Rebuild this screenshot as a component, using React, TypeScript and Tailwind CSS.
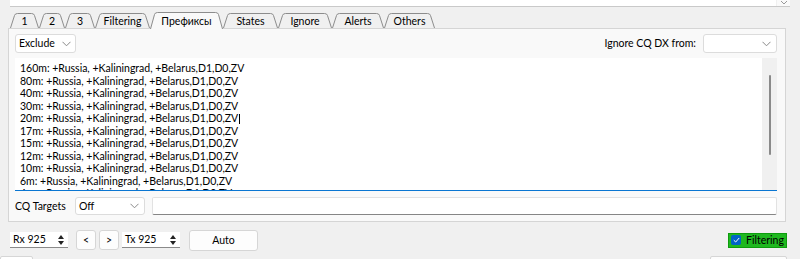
import React from "react";

const TABS = [
  { label: "1", w: 29 },
  { label: "2", w: 26 },
  { label: "3", w: 30 },
  { label: "Filtering", w: 55 },
  { label: "Префиксы", w: 73, active: true },
  { label: "States", w: 55 },
  { label: "Ignore", w: 54 },
  { label: "Alerts", w: 52 },
  { label: "Others", w: 51 },
];

// last one only peeks out under the bottom edge
const BANDS = ["160m", "80m", "40m", "30m", "20m", "17m", "15m", "12m", "10m", "6m", "4m"];
const PREFIXES = "+Russia, +Kaliningrad, +Belarus,D1,D0,ZV";

const Chevron = ({ className }: { className?: string }) => (
  <svg width="9" height="6" viewBox="0 0 9 6" className={className}>
    <path d="M0.5 0.8 L4.5 4.8 L8.5 0.8" fill="none" stroke="#8a8a8a" strokeWidth="1" />
  </svg>
);

const Tab = ({ label, w, active }: { label: string; w: number; active?: boolean }) => {
  const h = active ? 17 : 15;
  return (
    <div
      className={`relative flex items-center justify-center ${active ? "h-[17px] -mb-px z-10" : "h-[15px]"}`}
      style={{ width: w }}
    >
      <svg className="absolute inset-0" width={w} height={h} viewBox={`0 0 ${w} ${h}`}>
        <path
          d={`M0.5 ${h} L4.5 2.5 Q5 0.5 7.5 0.5 L${w - 7.5} 0.5 Q${w - 5} 0.5 ${w - 4.5} 2.5 L${w - 0.5} ${h}`}
          fill={active ? "#f9f9f9" : "#f0f0f0"}
          stroke="#8c8c8c"
          strokeWidth="1"
        />
      </svg>
      <span className={`relative mt-[1px] text-[10.5px] leading-none text-black ${active ? "-mt-[1px]" : ""}`}>{label}</span>
    </div>
  );
};

const Spin = ({ label }: { label: string }) => (
  <div className="flex h-[16px] w-[58px] items-center justify-between bg-white border-b border-[#8a8a8a] pl-[3px] pr-[4px]">
    <span className="text-[10.5px] leading-none text-black">{label}</span>
    <div className="flex flex-col gap-[2px]">
      <svg width="6" height="4" viewBox="0 0 6 4"><path d="M0 4 L3 0 L6 4 Z" fill="#222" /></svg>
      <svg width="6" height="4" viewBox="0 0 6 4"><path d="M0 0 L3 4 L6 0 Z" fill="#222" /></svg>
    </div>
  </div>
);

const SmallButton = ({ label }: { label: string }) => (
  <div className="flex h-[20px] w-[20px] items-center justify-center rounded-[3px] border border-[#d6d6d6] bg-[#fdfdfd] text-[10.5px] leading-none text-black">
    {label}
  </div>
);

export default function App() {
  return (
    <div className="relative h-[259px] w-[800px] overflow-hidden bg-[#f0f0f0] font-['Lato',sans-serif] text-black">
      {/* list above, cut off */}
      <div className="ml-[10px] mr-[10px] flex h-[7px] border-b border-[#c9c9c9] bg-white">
        <div className="flex-1" />
        <div className="flex w-[14px] justify-center border-l border-[#f0f0f0] bg-[#fafafa]">
          <svg width="6" height="4" viewBox="0 0 6 4" className="mt-[1px]"><path d="M0 0 L3 3 L6 0" fill="none" stroke="#9a9a9a" /></svg>
        </div>
      </div>

      {/* tabs */}
      <div className="mt-[5px] flex h-[16px] items-end pl-[10px]">
        {TABS.map((t) => (
          <Tab key={t.label} label={t.label} w={t.w} active={t.active} />
        ))}
      </div>

      {/* tab pane */}
      <div className="ml-[8px] flex h-[194px] w-[778px] flex-col border border-[#d5d5d5] bg-[#f9f9f9] pl-[6px] pr-[8px] pt-[5px]">
        <div className="flex h-[19px] items-center justify-between">
          <div className="flex h-[19px] w-[61px] items-center justify-between rounded-[3px] border border-[#dcdcdc] bg-white pl-[3px] pr-[4px]">
            <span className="text-[10.5px] leading-none">Exclude</span>
            <Chevron />
          </div>
          <div className="flex items-center gap-[7px]">
            <span className="whitespace-nowrap text-[10.5px] leading-none">Ignore CQ DX from:</span>
            <div className="flex h-[19px] w-[74px] items-center justify-end rounded-[3px] border border-[#dcdcdc] bg-white pr-[5px]">
              <Chevron />
            </div>
          </div>
        </div>

        <div className="mt-[5px] flex h-[133px] overflow-hidden border-b border-[#0a76d2] bg-white">
          <div className="flex-1 overflow-hidden pl-[5px] pt-[4px] text-[10.5px]">
            {BANDS.map((b) => (
              <div key={b} className="h-[12.5px] whitespace-nowrap leading-[12.5px]">
                {b}: {PREFIXES}
                {b === "20m" && <span className="ml-[1px] inline-block h-[10px] w-px align-[-2px] bg-black" />}
              </div>
            ))}
          </div>
          <div className="flex w-[15px] justify-center bg-[#f0f0f0] pt-[17px]">
            <div className="h-[80px] w-[2px] rounded-full bg-[#8a8a8a]" />
          </div>
        </div>

        <div className="mt-[6px] flex h-[18px] items-center">
          <span className="w-[60px] whitespace-nowrap text-[10.5px] leading-none">CQ Targets</span>
          <div className="flex h-[18px] w-[70px] items-center justify-between rounded-[3px] border border-[#dcdcdc] bg-white pl-[3px] pr-[5px]">
            <span className="text-[10.5px] leading-none">Off</span>
            <Chevron />
          </div>
          <div className="ml-[7px] h-[18px] flex-1 rounded-[2px] border border-[#e2e2e2] border-b-[#868686] bg-white" />
        </div>
      </div>

      {/* bottom controls */}
      <div className="mt-[7px] flex h-[22px] items-center pl-[10px] pr-[13px]">
        <Spin label="Rx 925" />
        <div className="ml-[8px] flex gap-[3px]">
          <SmallButton label="<" />
          <SmallButton label=">" />
        </div>
        <div className="ml-[3px]">
          <Spin label="Tx 925" />
        </div>
        <div className="ml-[9px] flex h-[21px] w-[69px] items-center justify-center rounded-[3px] border border-[#d6d6d6] bg-[#fdfdfd] text-[10.5px] leading-none">
          Auto
        </div>
        <div className="flex-1" />
        <div className="flex h-[15px] w-[59px] items-center gap-[5px] border border-[#0d9c0d] bg-[#1fb81f] pl-[2px]">
          <div className="flex h-[10px] w-[10px] items-center justify-center rounded-[2px] bg-[#0063c6]">
            <svg width="7" height="6" viewBox="0 0 7 6"><path d="M0.8 3.2 L2.7 5 L6.2 1" fill="none" stroke="#fff" strokeWidth="1" /></svg>
          </div>
          <span className="text-[10.5px] leading-none text-black">Filtering</span>
        </div>
      </div>

      {/* next row, cut off */}
      <div className="mt-[5px] flex justify-between pr-[13px]">
        <div className="h-[6px] w-[33px] rounded-[2px] border border-[#d6d6d6] bg-white" />
        <div className="h-[6px] w-[77px] rounded-[2px] border border-[#d6d6d6] bg-[#fdfdfd]" />
      </div>
    </div>
  );
}
